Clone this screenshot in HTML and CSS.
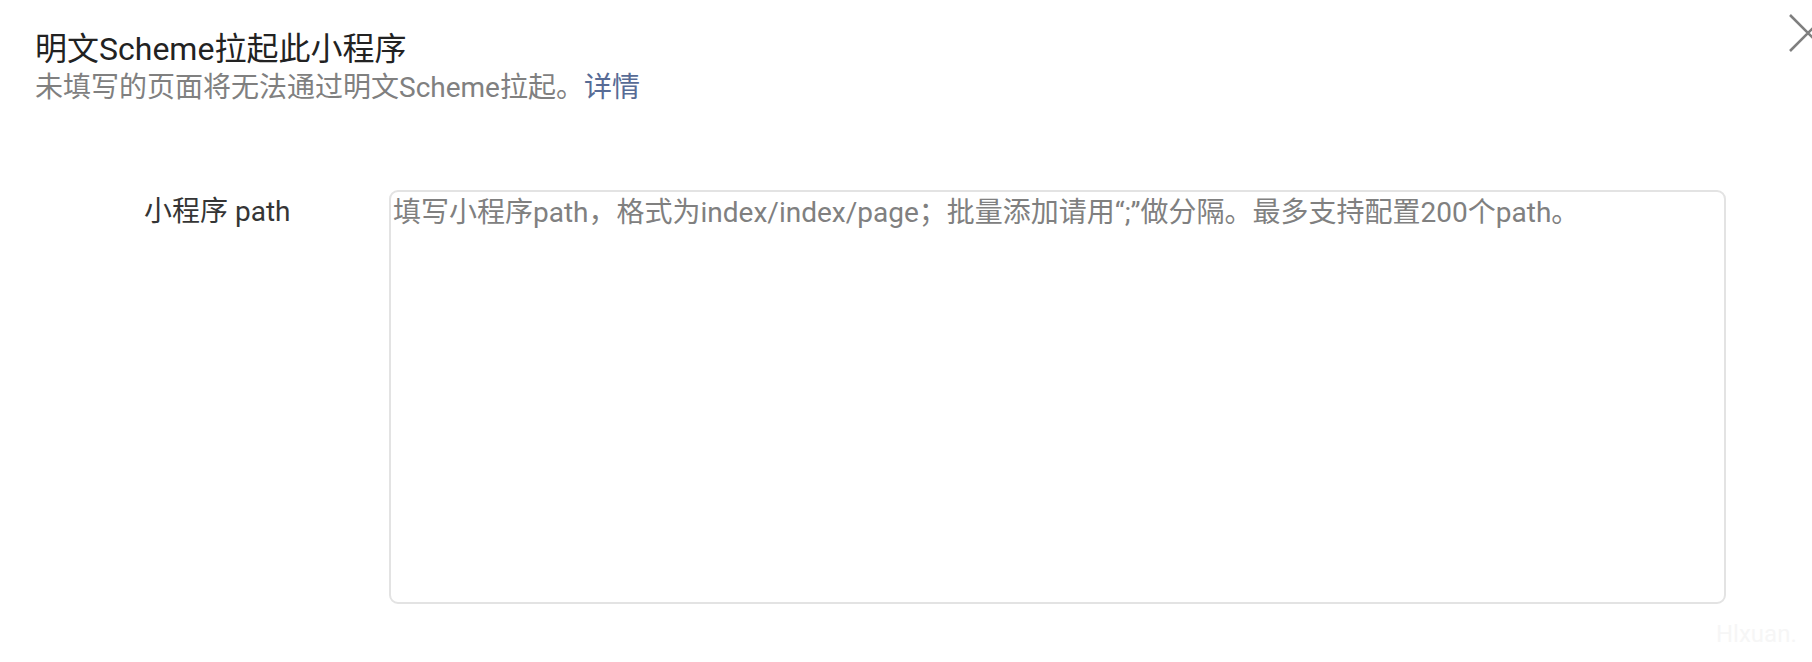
FILE: index.html
```html
<!DOCTYPE html>
<html lang="zh-CN">
<head>
  <meta charset="UTF-8">
  <title>明文Scheme拉起此小程序</title>
  <link rel="stylesheet" href="styles.css">
</head>
<body>

<div class="dialog">
  <!-- 标题 -->
  <div class="dialog-hd">
    <h3 class="dialog-title">明文Scheme拉起此小程序</h3>
    <p class="dialog-desc">未填写的页面将无法通过明文Scheme拉起。<a href="#" class="link">详情</a></p>
  </div>

  <button class="close-btn" type="button" aria-label="关闭">
    <svg width="40" height="40" viewBox="0 0 40 40">
      <path d="M2 2 L38 38 M38 2 L2 38" stroke="#7f7f7f" stroke-width="2.6" fill="none"/>
    </svg>
  </button>

  <!-- 表单 -->
  <form class="form-row">
    <label class="form-label" for="paths">小程序 path</label>
    <textarea id="paths" class="form-textarea" placeholder="填写小程序path，格式为index/index/page；批量添加请用“;”做分隔。最多支持配置200个path。"></textarea>
  </form>

  <div class="watermark">Hlxuan.</div>
</div>

</body>
</html>
```

FILE: styles.css
```css
html, body {
  margin: 0;
  background: #fff;
  overflow: hidden;
}
body {
  font-family: Roboto, "Noto Sans CJK SC", sans-serif;
  color: #353535;
}
.dialog {
  position: relative;
  height: 662px;
}
.dialog-hd {
  padding: 29px 0 0 35px;
}
.dialog-title {
  margin: 0;
  font-size: 32px;
  font-weight: 400;
  line-height: 40px;
  color: #222;
}
.dialog-desc {
  margin: 1px 0 0;
  font-size: 28px;
  line-height: 36px;
  color: #808080;
}
.link {
  color: #576b95;
  text-decoration: none;
}
.close-btn {
  position: absolute;
  top: 13px;
  left: 1788px;
  padding: 0;
  border: none;
  background: none;
  cursor: pointer;
}
.close-btn svg {
  display: block;
}
.form-row {
  display: grid;
  grid-template-columns: 245px 1337px;
  margin-top: 84px;
  padding-left: 144px;
}
.form-label {
  margin-top: 2px;
  font-size: 28px;
  line-height: 40px;
  color: #353535;
}
.form-textarea {
  height: 414px;
  box-sizing: border-box;
  margin: 0;
  padding: 1px 2px 0;
  border: 2px solid #e3e3e3;
  border-radius: 9px;
  font-family: inherit;
  font-size: 28px;
  line-height: 40px;
  color: #353535;
  resize: none;
  outline: none;
}
.form-textarea::placeholder {
  color: #808080;
}
.watermark {
  position: absolute;
  left: 1716px;
  top: 620px;
  font-family: Roboto, sans-serif;
  font-size: 24px;
  color: #f6f6f6;
}
```
